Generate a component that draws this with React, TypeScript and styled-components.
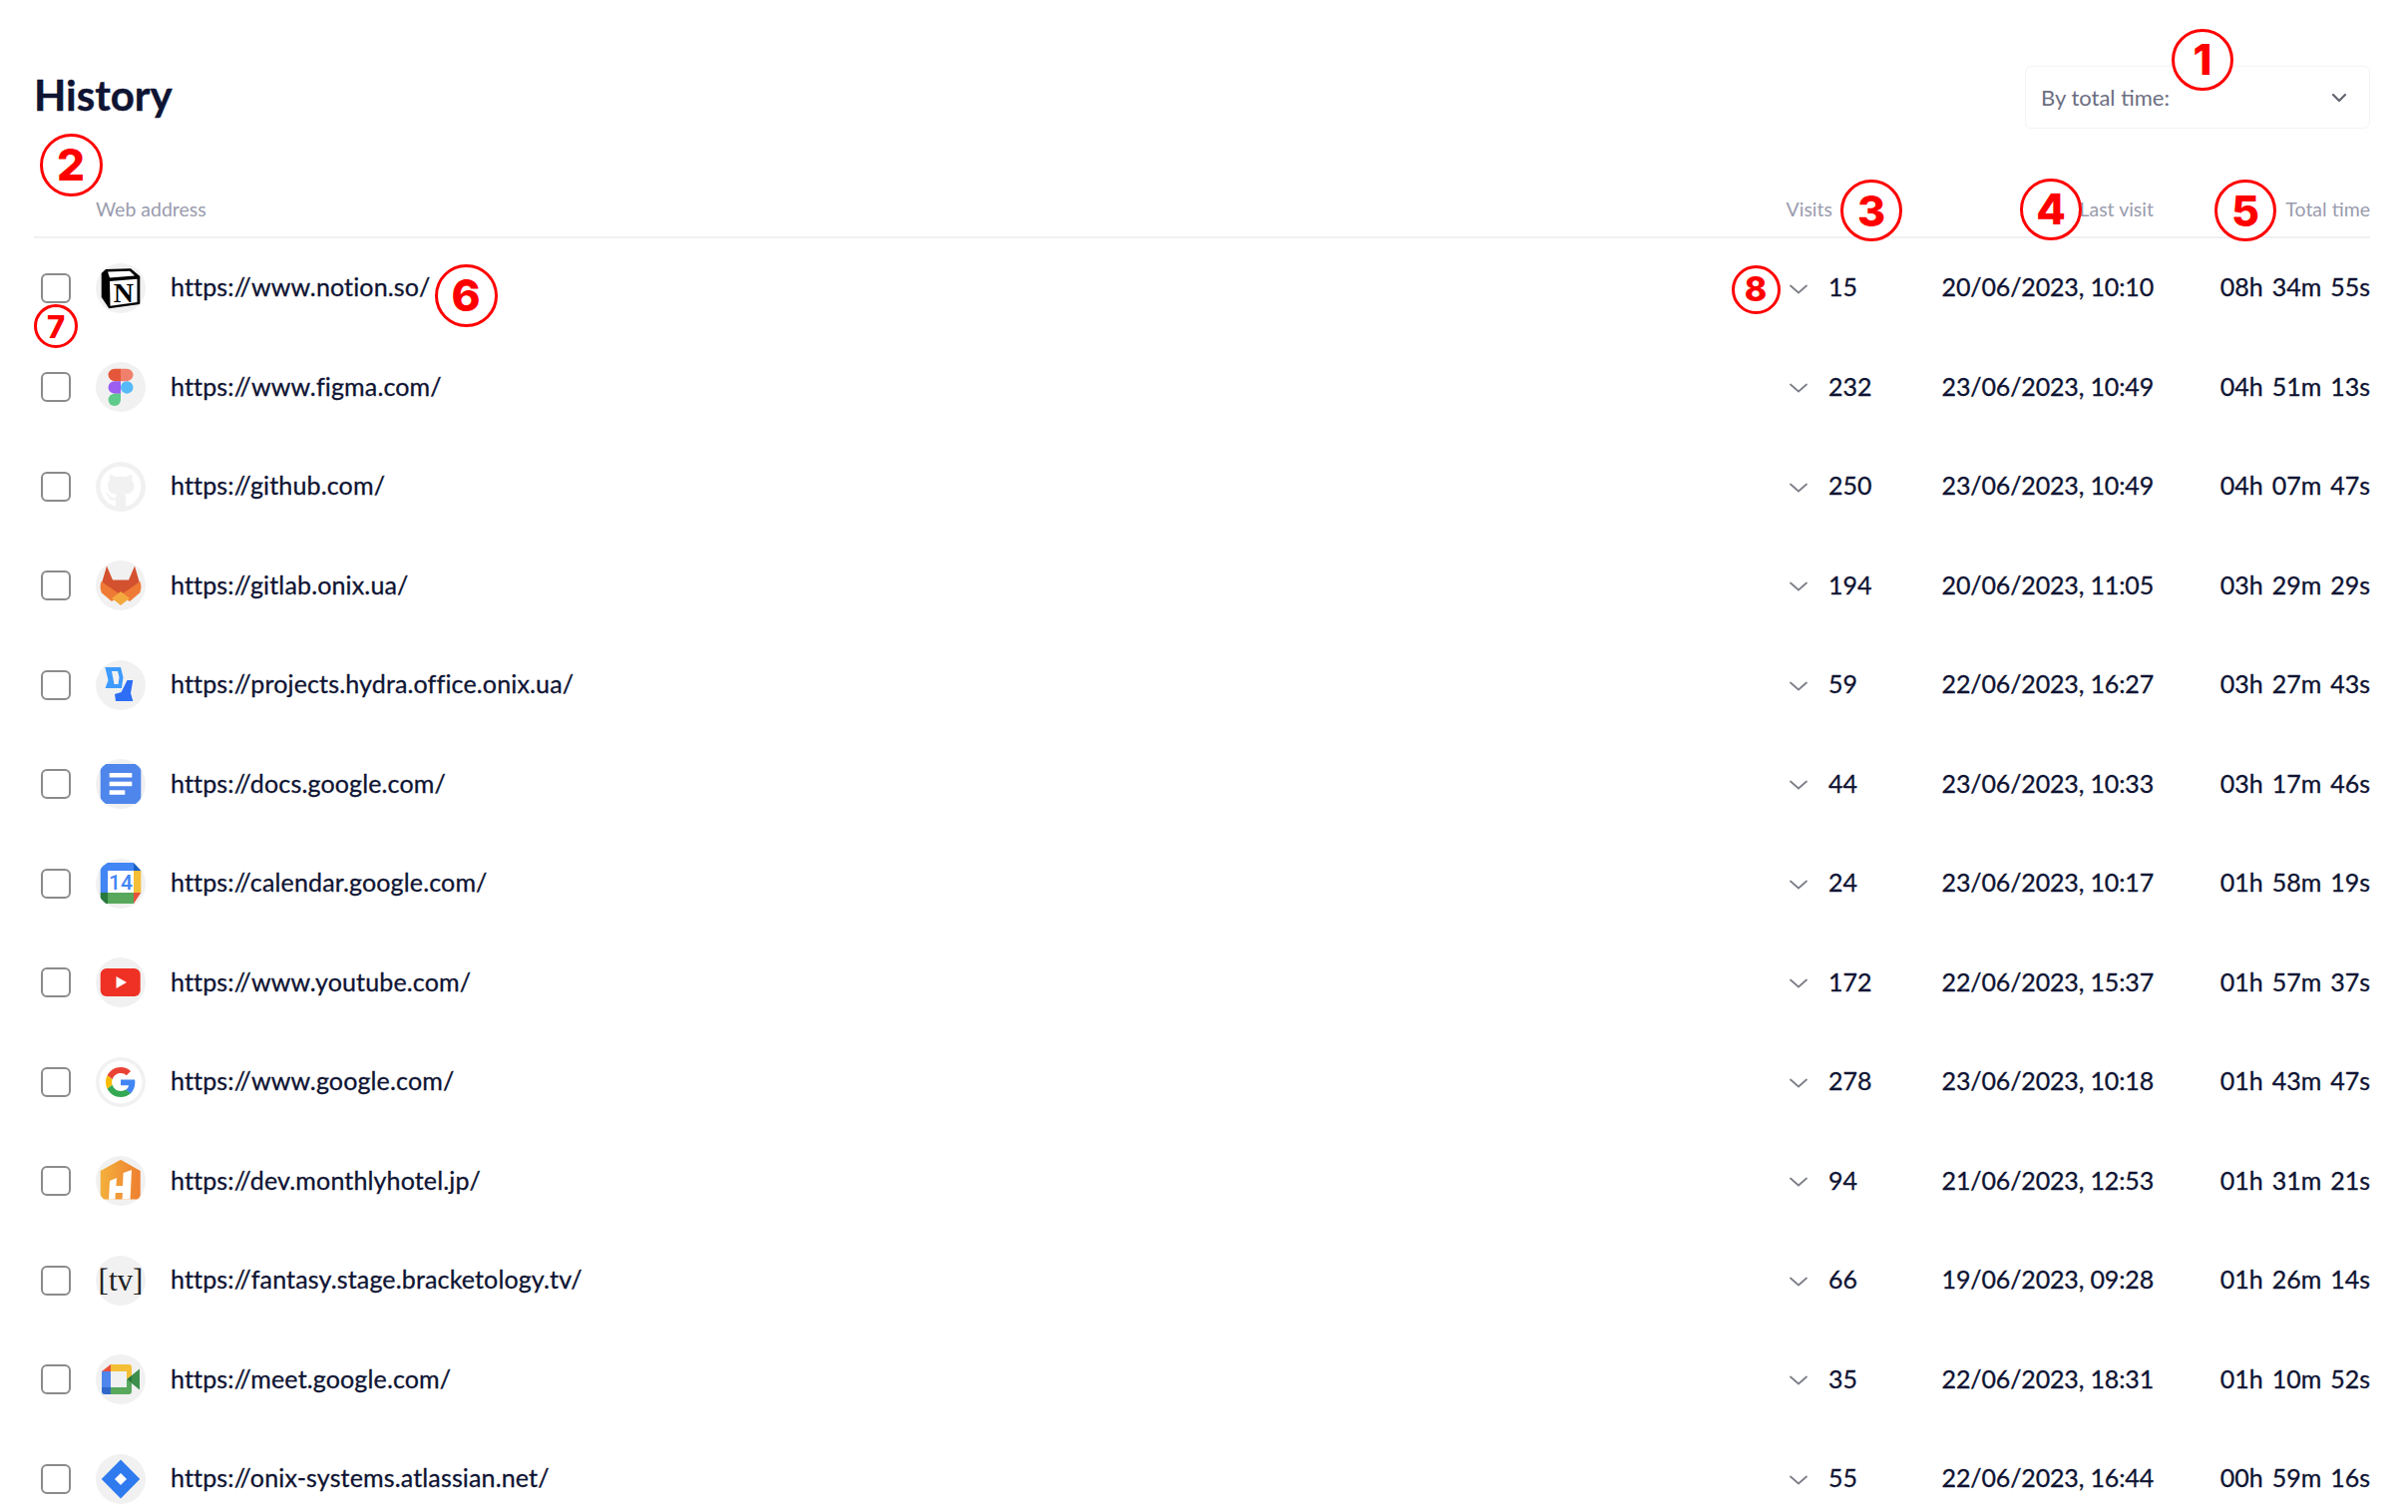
import React, { ReactNode } from "react";
import styled, { createGlobalStyle } from "styled-components";
import { FaGithub } from "react-icons/fa";

const GlobalStyle = createGlobalStyle`
    html, body {
        margin: 0;
        padding: 0;
        background: #fff;
    }
    body {
        font-family: "Lato", "Open Sans", sans-serif;
        color: #0f1433;
    }
`;

const Page = styled.div`
    position: relative;
    width: 2414px;
    height: 1516px;
    overflow: hidden;
    padding: 66px 38px 0 34px;
    box-sizing: border-box;
`;

const TopBar = styled.div`
    display: flex;
    align-items: center;
    justify-content: space-between;
    height: 63px;
`;

const Title = styled.h1`
    margin: -6px 0 0;
    font-size: 42px;
    font-weight: 700;
    color: #0f1433;
    -webkit-text-stroke: 0.4px #0f1433;
`;

const SortSelect = styled.div`
    display: flex;
    align-items: center;
    justify-content: space-between;
    width: 346px;
    height: 63px;
    box-sizing: border-box;
    padding: 0 22px 0 15px;
    border: 1.5px solid #f3f4f8;
    border-radius: 6px;
    font-size: 22px;
    color: #6c6e82;
`;

const ColumnHead = styled.div`
    display: grid;
    grid-template-columns: 62px 1fr auto 322px 217px;
    align-items: center;
    height: 110px;
    box-sizing: border-box;
    padding-top: 66px;
    border-bottom: 2px solid #eff0f3;
    font-size: 19.5px;
    color: #9a9cae;
`;

const HeadCell = styled.div<{ $right?: boolean }>`
    grid-column: ${(p) => (p.$right ? "auto" : "2")};
    text-align: ${(p) => (p.$right ? "right" : "left")};
    transform: translateY(-7px);
`;

const Row = styled.div`
    display: grid;
    grid-template-columns: 62px 75px 1fr 43px 90px 236px 217px;
    align-items: center;
    height: 99.5px;
    font-size: 25px;
    color: #0f1433;
    -webkit-text-stroke: 0.3px #0f1433;
`;

const Check = styled.div`
    width: 30px;
    height: 30px;
    margin-left: 7px;
    box-sizing: border-box;
    border: 2px solid #8b8b8b;
    border-radius: 6px;
    background: #fff;
`;

const Avatar = styled.div`
    width: 50px;
    height: 50px;
    border-radius: 50%;
    background: #f1f1f1;
    display: flex;
    align-items: center;
    justify-content: center;
    overflow: hidden;
    -webkit-text-stroke: 0;
    svg {
        display: block;
    }
`;

const Url = styled.div`
    padding-bottom: 3px;
    letter-spacing: 0.15px;
    white-space: nowrap;
`;

const Expand = styled.div`
    display: flex;
    align-items: center;
    padding: 2px 0 0 3px;
`;

const Cell = styled.div`
    padding-bottom: 3px;
    white-space: nowrap;
`;

const DateCell = styled.div`
    padding-bottom: 3px;
    text-align: right;
    letter-spacing: -0.15px;
    white-space: nowrap;
`;

const TimeCell = styled.div`
    padding-bottom: 3px;
    text-align: right;
    word-spacing: 2.5px;
    white-space: nowrap;
`;

const Mark = styled.div<{ $x: number; $y: number; $size: number }>`
    position: absolute;
    left: ${(p) => p.$x - p.$size / 2}px;
    top: ${(p) => p.$y - p.$size / 2}px;
    width: ${(p) => p.$size}px;
    height: ${(p) => p.$size}px;
    box-sizing: border-box;
    border: 3px solid #f00;
    border-radius: 50%;
    background: #fff;
    color: #f00;
    display: flex;
    align-items: center;
    justify-content: center;
    font-family: "Inter", sans-serif;
    font-weight: 800;
    font-size: ${(p) => Math.round(p.$size * 0.7)}px;
    line-height: 1;
`;

const Logo = ({ children }: { children: ReactNode }) => (
    <svg width="50" height="50" viewBox="0 0 50 50">
        {children}
    </svg>
);

const Notion = () => (
    <Logo>
        <path d="M10 6 L35 5.3 L44.3 13 V41 L13.3 45.3 L5.7 34 V10 Z" fill="#000" />
        <path d="M12 8.5 L34 7.8 L39 12.5 L14 14.5 Z" fill="#fff" />
        <path d="M14 18 L41.5 15.8 V39 L14.5 42.8 Z" fill="#fff" />
        <text x="27.8" y="38.5" textAnchor="middle" fontFamily="Liberation Serif" fontWeight="700" fontSize="28" fill="#000">
            N
        </text>
    </Logo>
);

const Figma = () => (
    <Logo>
        <path d="M25 6.7 H18.8 A6.2 6.2 0 0 0 18.8 19.2 H25 Z" fill="#e4573a" />
        <path d="M25 6.7 H31.2 A6.2 6.2 0 0 1 31.2 19.2 H25 Z" fill="#f0806b" />
        <path d="M25 19.2 H18.8 A6.2 6.2 0 0 0 18.8 31.7 H25 Z" fill="#9b5ef0" />
        <circle cx="31.2" cy="25.45" r="6.25" fill="#56b9f8" />
        <path d="M18.8 31.7 H25 V37.9 A6.2 6.2 0 1 1 18.8 31.7 Z" fill="#5fcb8a" />
    </Logo>
);

const Gitlab = () => (
    <Logo>
        <path d="M11 5.5 L17 19.5 H33 L39 5.5 L45.3 27 L25 44.5 L4.7 27 Z" fill="#d4512f" />
        <path d="M5.5 21 L25 34.5 L16 41 L6 32.5 Q3.5 27 5.5 21 Z" fill="#ee7a35" />
        <path d="M44.5 21 L25 34.5 L34 41 L44 32.5 Q46.5 27 44.5 21 Z" fill="#ee7a35" />
        <path d="M16 38 L25 31 L34 38 L25 44.8 Z" fill="#f4a93e" />
    </Logo>
);

const Hydra = () => (
    <Logo>
        <path
            fillRule="evenodd"
            d="M9.3 7 H25 L27.5 17 L26 28 H9.5 L12.5 20 L9.3 7 Z M16 11 L18.5 24 H22.5 L23.5 17 L22 11 Z"
            fill="#3d9bff"
        />
        <path d="M25.5 32 L31.5 20 H37.3 L35 33 L37.3 41 H20 L19 34 Z" fill="#2d6ef5" />
    </Logo>
);

const Docs = () => (
    <Logo>
        <path d="M7 5 H41 L45.3 9 V41 L41 45 H9 L4.7 41 V7.5 Z" fill="#4f86ec" />
        <rect x="13.7" y="14" width="22.6" height="4.5" fill="#fff" />
        <rect x="13.7" y="22.7" width="22.6" height="4.5" fill="#fff" />
        <rect x="13.7" y="31.3" width="15.6" height="4.5" fill="#fff" />
    </Logo>
);

const Calendar = () => (
    <Logo>
        <path d="M7 4 H38 V12 H12 V34 H4.7 V6.5 Z" fill="#4285f4" />
        <path d="M38 4 L45.3 12 H38 Z" fill="#1a5fc4" />
        <rect x="12" y="12" width="26" height="22" fill="#fff" />
        <rect x="38" y="12" width="7.3" height="22" fill="#f4bf36" />
        <rect x="12" y="34" width="26" height="11" fill="#57a85c" />
        <path d="M4.7 34 H12 V45 H10 L4.7 40 Z" fill="#27793c" />
        <path d="M38 34 H45.3 L38 45 Z" fill="#e8503a" />
        <text x="25" y="31" textAnchor="middle" fontFamily="Roboto" fontWeight="500" fontSize="21" fill="#4285f4">
            14
        </text>
    </Logo>
);

const Youtube = () => (
    <Logo>
        <rect x="4.7" y="11" width="40" height="28" rx="6" fill="#ee3124" />
        <path d="M20.5 19 L31 25 L20.5 31 Z" fill="#fff" />
    </Logo>
);

const Google = () => (
    <Logo>
        <circle cx="25" cy="25" r="21.5" fill="#fff" />
        <svg x="10" y="10" width="30" height="30" viewBox="0 0 48 48">
            <path fill="#EA4335" d="M24 9.5c3.54 0 6.71 1.22 9.21 3.6l6.85-6.85C35.9 2.38 30.47 0 24 0 14.62 0 6.51 5.38 2.56 13.22l7.98 6.19C12.43 13.72 17.74 9.5 24 9.5z" />
            <path fill="#4285F4" d="M46.98 24.55c0-1.57-.15-3.09-.38-4.55H24v9.02h12.94c-.58 2.96-2.26 5.48-4.78 7.18l7.73 6c4.51-4.18 7.09-10.36 7.09-17.65z" />
            <path fill="#FBBC05" d="M10.53 28.59c-.5-1.45-.78-2.99-.78-4.59s.27-3.14.78-4.59l-7.98-6.19C.92 16.46 0 20.12 0 24c0 3.88.92 7.54 2.56 10.78l7.97-6.19z" />
            <path fill="#34A853" d="M24 48c6.48 0 11.93-2.13 15.89-5.81l-7.73-6c-2.15 1.45-4.92 2.3-8.16 2.3-6.26 0-11.57-4.22-13.47-9.91l-7.98 6.19C6.51 42.62 14.62 48 24 48z" />
        </svg>
    </Logo>
);

const Monthly = () => (
    <Logo>
        <defs>
            <linearGradient id="monthly" x1="0" x2="1" y1="0" y2="0">
                <stop offset="0" stopColor="#f3b03c" />
                <stop offset="1" stopColor="#ee7f30" />
            </linearGradient>
        </defs>
        <path d="M25 3.7 L44.7 15 V43.5 H4.7 V15 Z" fill="url(#monthly)" />
        <path d="M14 25 L21 22 L20.4 30 H27 L27.6 17 L36 14 L34.5 43.5 H26.5 L26.9 37 H19.8 L19.4 43.5 H13 Z" fill="#fff" />
    </Logo>
);

const TvLabel = styled.div`
    font-family: "Liberation Serif", serif;
    font-size: 31px;
    line-height: 1;
    color: #222;
    -webkit-text-stroke: 0;
`;

const Meet = () => (
    <Logo>
        <path d="M15 10 V17 H6 Z" fill="#e8503a" />
        <rect x="15" y="10" width="16" height="7" fill="#f4bf36" />
        <path d="M31 10 H33 A3 3 0 0 1 36 13 V21 L31 25 V17 Z" fill="#f4bf36" />
        <rect x="6" y="17" width="9" height="16" fill="#4f86ec" />
        <path d="M6 33 H15 V40 H9 A3 3 0 0 1 6 37 Z" fill="#2f68c9" />
        <path d="M15 33 H31 V25 L36 29 V37 A3 3 0 0 1 33 40 H15 Z" fill="#57a85c" />
        <path d="M31 25 L36 21 V29 Z" fill="#27793c" />
        <path d="M36 21 L44 14.5 V35.5 L36 29 Z" fill="#3d8f4c" />
    </Logo>
);

const Jira = () => (
    <Logo>
        <path d="M25 5.5 L44.3 25 L25 44.5 L5.7 25 Z" fill="#2f7aee" />
        <path d="M25 19 L31 25 L25 31 L19 25 Z" fill="#fff" />
    </Logo>
);

const RowChevron = () => (
    <svg width="20" height="12" viewBox="0 0 20 12" fill="none" stroke="#7d7f88" strokeWidth="1.8" strokeLinecap="round">
        <path d="M2 2.5 L10 9.5 L18 2.5" />
    </svg>
);

const SelectChevron = () => (
    <svg width="16" height="10" viewBox="0 0 16 10" fill="none" stroke="#62646f" strokeWidth="2.2" strokeLinecap="round" strokeLinejoin="round">
        <path d="M2 2 L8 8 L14 2" />
    </svg>
);

const GithubMark = () => <FaGithub size={42} color="#fff" />;

const rows: { icon: ReactNode; url: string; visits: string; last: string; total: string }[] = [
    { icon: <Notion />, url: "https://www.notion.so/", visits: "15", last: "20/06/2023, 10:10", total: "08h 34m 55s" },
    { icon: <Figma />, url: "https://www.figma.com/", visits: "232", last: "23/06/2023, 10:49", total: "04h 51m 13s" },
    { icon: <GithubMark />, url: "https://github.com/", visits: "250", last: "23/06/2023, 10:49", total: "04h 07m 47s" },
    { icon: <Gitlab />, url: "https://gitlab.onix.ua/", visits: "194", last: "20/06/2023, 11:05", total: "03h 29m 29s" },
    { icon: <Hydra />, url: "https://projects.hydra.office.onix.ua/", visits: "59", last: "22/06/2023, 16:27", total: "03h 27m 43s" },
    { icon: <Docs />, url: "https://docs.google.com/", visits: "44", last: "23/06/2023, 10:33", total: "03h 17m 46s" },
    { icon: <Calendar />, url: "https://calendar.google.com/", visits: "24", last: "23/06/2023, 10:17", total: "01h 58m 19s" },
    { icon: <Youtube />, url: "https://www.youtube.com/", visits: "172", last: "22/06/2023, 15:37", total: "01h 57m 37s" },
    { icon: <Google />, url: "https://www.google.com/", visits: "278", last: "23/06/2023, 10:18", total: "01h 43m 47s" },
    { icon: <Monthly />, url: "https://dev.monthlyhotel.jp/", visits: "94", last: "21/06/2023, 12:53", total: "01h 31m 21s" },
    { icon: <TvLabel>[tv]</TvLabel>, url: "https://fantasy.stage.bracketology.tv/", visits: "66", last: "19/06/2023, 09:28", total: "01h 26m 14s" },
    { icon: <Meet />, url: "https://meet.google.com/", visits: "35", last: "22/06/2023, 18:31", total: "01h 10m 52s" },
    { icon: <Jira />, url: "https://onix-systems.atlassian.net/", visits: "55", last: "22/06/2023, 16:44", total: "00h 59m 16s" },
];

// numbered callouts drawn over the screenshot
const marks = [
    { n: 1, x: 2208, y: 59.5, size: 62 },
    { n: 2, x: 71, y: 165, size: 63 },
    { n: 3, x: 1876, y: 211, size: 62 },
    { n: 4, x: 2056, y: 209.5, size: 62 },
    { n: 5, x: 2251, y: 211, size: 62 },
    { n: 6, x: 467, y: 296, size: 63 },
    { n: 7, x: 56, y: 327, size: 44 },
    { n: 8, x: 1760, y: 290, size: 49 },
];

const App = () => {
    return (
        <Page>
            <GlobalStyle />
            <TopBar>
                <Title>History</Title>
                <SortSelect>
                    By total time:
                    <SelectChevron />
                </SortSelect>
            </TopBar>
            <ColumnHead>
                <HeadCell>Web address</HeadCell>
                <HeadCell $right>Visits</HeadCell>
                <HeadCell $right>Last visit</HeadCell>
                <HeadCell $right>Total time</HeadCell>
            </ColumnHead>
            {rows.map((row) => (
                <Row key={row.url}>
                    <Check />
                    <Avatar>{row.icon}</Avatar>
                    <Url>{row.url}</Url>
                    <Expand>
                        <RowChevron />
                    </Expand>
                    <Cell>{row.visits}</Cell>
                    <DateCell>{row.last}</DateCell>
                    <TimeCell>{row.total}</TimeCell>
                </Row>
            ))}
            {marks.map((m) => (
                <Mark key={m.n} $x={m.x} $y={m.y} $size={m.size}>
                    {m.n}
                </Mark>
            ))}
        </Page>
    );
};

export default App;
